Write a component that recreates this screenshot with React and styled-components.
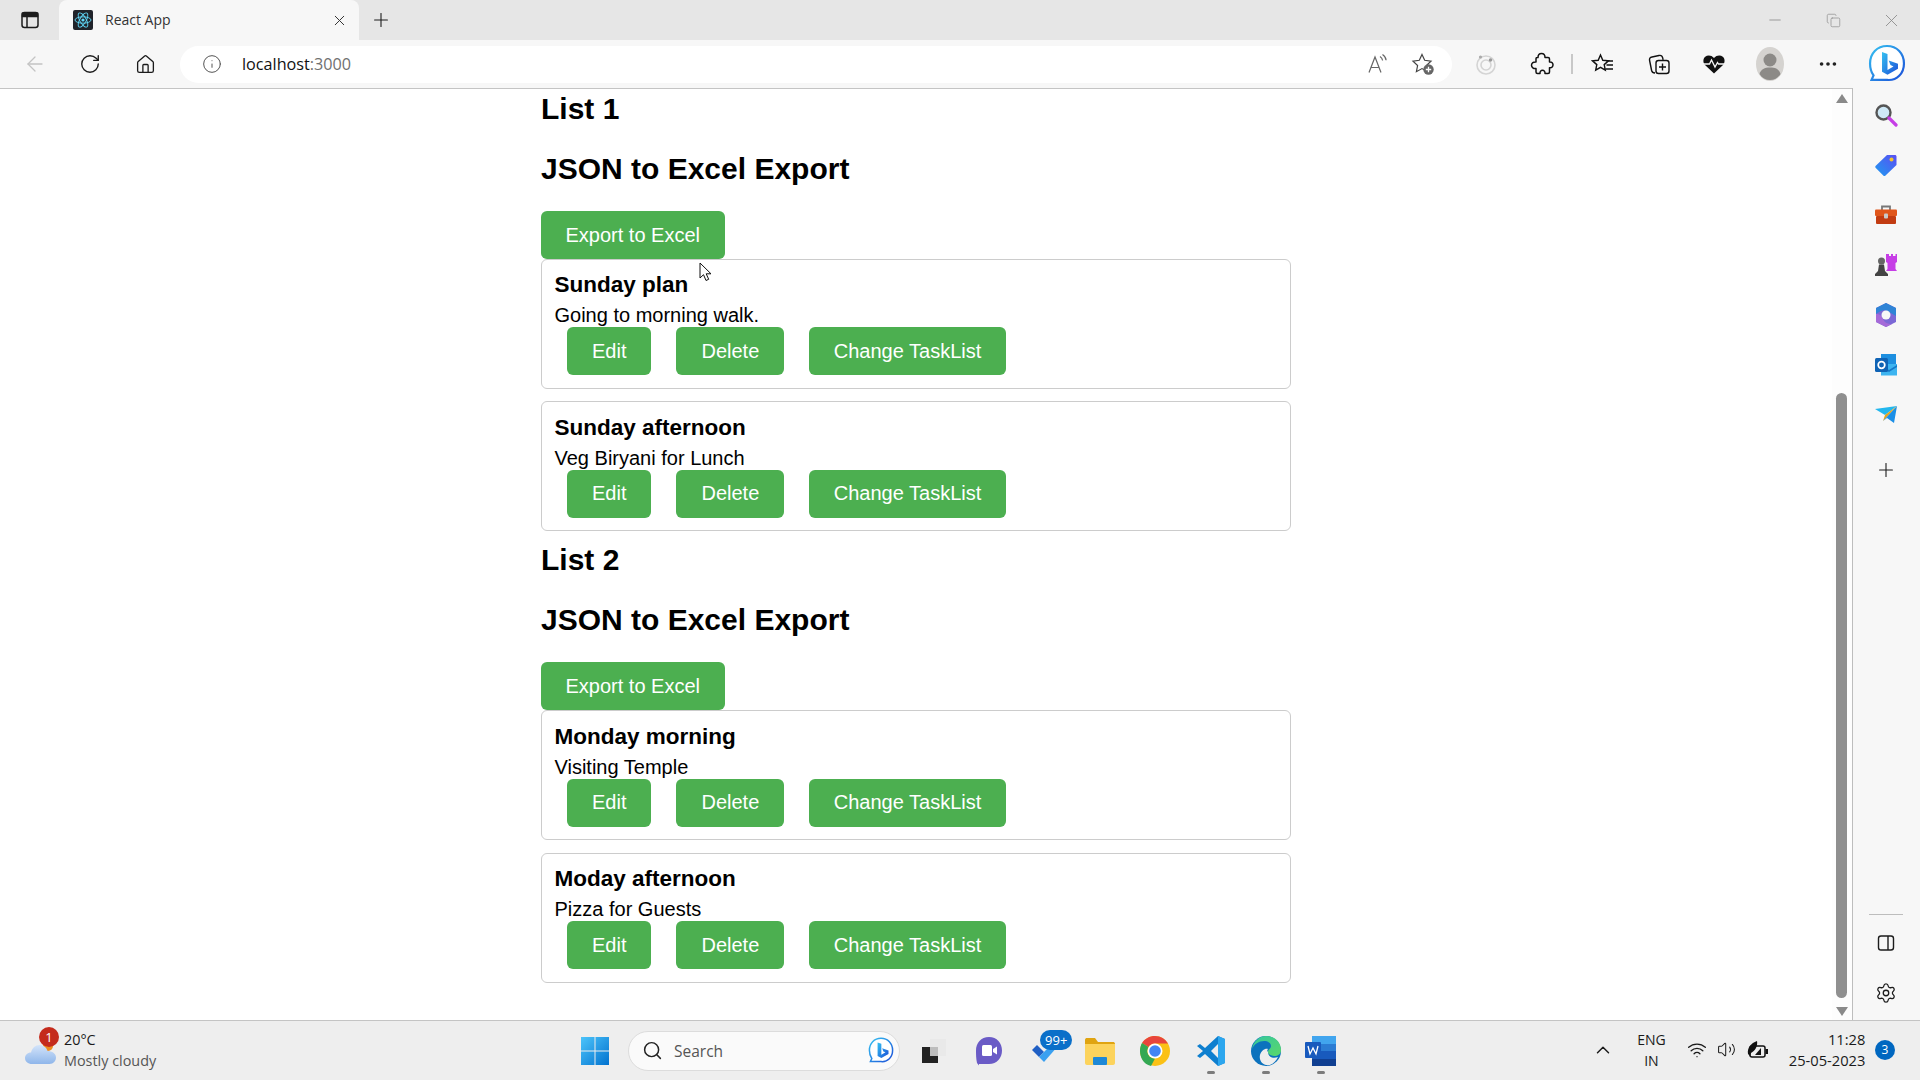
import React from 'react';
import styled, { createGlobalStyle } from 'styled-components';
import {
    ArrowLeft, RotateCw, Home, Info, Plus, X, Minus, Copy,
    MoreHorizontal, Search, Settings, ChevronUp, Wifi, Volume2
} from 'lucide-react';

const GlobalStyle = createGlobalStyle`
    html, body {
        margin: 0;
        height: 100%;
        overflow: hidden;
    }
    * {
        box-sizing: border-box;
    }
`;

const UI_FONT = '"Open Sans", "Noto Sans", sans-serif';

const Screen = styled.div`
    width: 1920px;
    height: 1080px;
    display: flex;
    flex-direction: column;
    background: #fff;
    overflow: hidden;
`;

/* browser chrome */
const TabStrip = styled.div`
    height: 40px;
    flex: none;
    display: flex;
    align-items: stretch;
    background: #e6e6e6;
`;
const Slot = styled.div`
    width: ${p => p.$w}px;
    flex: none;
    display: flex;
    align-items: center;
    justify-content: center;
    color: ${p => p.$color || '#1c1c1c'};
`;
const Tab = styled.div`
    width: 300px;
    flex: none;
    display: flex;
    align-items: center;
    padding: 0 11px 0 14px;
    background: #f7f7f7;
    border-radius: 8px 8px 0 0;
`;
const TabTitle = styled.span`
    flex: 1;
    margin-left: 12px;
    padding-bottom: 2px;
    font: 14px ${UI_FONT};
    color: #333;
`;
const StripSpacer = styled.div`
    flex: 1;
`;
const Toolbar = styled.div`
    height: 48px;
    flex: none;
    display: flex;
    align-items: center;
    padding-left: 7.5px;
    background: #f7f7f7;
`;
const AddressPill = styled.div`
    width: 1272px;
    height: 37px;
    flex: none;
    margin: 0 6px 0 7.5px;
    display: flex;
    align-items: center;
    padding: 0 0 0 22px;
    background: #fff;
    border-radius: 19px;
`;
const Url = styled.span`
    margin-left: 20px;
    flex: 1;
    font: 16.2px ${UI_FONT};
    color: #111;
`;
const UrlPort = styled.span`
    color: #707070;
`;
const ToolbarSeparator = styled.div`
    width: 2px;
    height: 20px;
    flex: none;
    margin: 0 2px 0 1px;
    background: #c8c8c8;
`;

/* page */
const Main = styled.div`
    flex: 1;
    min-height: 0;
    display: flex;
`;
const Page = styled.div`
    flex: 1;
    min-width: 0;
    position: relative;
    border-top: 1px solid #c4c4c4;
    padding-top: 3px;
    font-family: "Liberation Sans", Arial, sans-serif;
    color: #000;
    overflow: hidden;
`;
const Content = styled.div`
    width: 750px;
    margin: 0 auto;
`;
const Heading = styled.h2`
    margin: 0 0 25px;
    font-size: 30px;
    line-height: 34.5px;
    font-weight: 700;
`;
const Button = styled.button`
    display: block;
    height: 48px;
    padding: 0 ${p => (p.$tight ? 24.5 : 25)}px;
    border: 0;
    border-radius: 6px;
    background: #4caf50;
    color: #fff;
    font: 20px "Liberation Sans", Arial, sans-serif;
`;
const Card = styled.div`
    height: 130px;
    margin-bottom: 12.4px;
    padding: 12.2px 12.5px;
    border: 1.25px solid #ccc;
    border-radius: 6px;

    &:last-child {
        margin-bottom: 12px;
    }
`;
const CardTitle = styled.h3`
    margin: 0 0 6.1px;
    font-size: 22.5px;
    line-height: 26px;
    font-weight: 700;
`;
const CardText = styled.p`
    margin: 0;
    font-size: 20px;
    line-height: 23px;
`;
const CardActions = styled.div`
    display: flex;
    gap: 25px;
    padding: 0 12.5px;
`;
const Cursor = styled.svg`
    position: absolute;
    left: 699px;
    top: 173px;
`;

/* scrollbar + edge sidebar */
const ScrollBar = styled.div`
    width: 20px;
    flex: none;
    display: flex;
    flex-direction: column;
    align-items: center;
    padding: 5px 1px 0 0;
    border-top: 1px solid #c4c4c4;
    background: #fdfdfd;
`;
const ScrollArrow = styled.div`
    width: 0;
    height: 0;
    border-left: 6px solid transparent;
    border-right: 6px solid transparent;
    ${p => p.$down
        ? 'border-top: 9px solid #8a8a8a; margin-top: 9px;'
        : 'border-bottom: 9px solid #8a8a8a;'}
`;
const ScrollThumb = styled.div`
    width: 11px;
    height: 605px;
    margin-top: 290px;
    border-radius: 6px;
    background: #8f8f8f;
`;
const Sidebar = styled.div`
    width: 68px;
    flex: none;
    display: flex;
    flex-direction: column;
    align-items: center;
    padding: 2px 1px 2px 0;
    border-left: 1px solid #bdbdbd;
    background: #f7f7f7;
`;
const SideItem = styled.div`
    height: 50px;
    width: 100%;
    flex: none;
    display: flex;
    align-items: center;
    justify-content: center;
    margin-top: ${p => p.$offset || 0}px;
    color: #1c1c1c;
`;
const SideSpacer = styled.div`
    flex: 1;
`;
const SideRule = styled.div`
    width: 34px;
    height: 1px;
    margin-bottom: 3px;
    background: #bdbdbd;
`;

/* taskbar */
const Taskbar = styled.div`
    height: 60px;
    flex: none;
    display: flex;
    align-items: center;
    border-top: 1px solid #c4c4c4;
    background: #eeeeee;
    font-family: ${UI_FONT};
    color: #1a1a1a;
`;
const Weather = styled.div`
    width: 581px;
    height: 100%;
    flex: none;
    display: flex;
    align-items: center;
    padding: 0 0 2px 25px;
`;
const WeatherIcon = styled.div`
    position: relative;
    width: 32px;
    height: 34px;
    flex: none;
    display: flex;
    align-items: flex-end;
    padding-bottom: 3px;
`;
const AlertBadge = styled.span`
    position: absolute;
    left: 14px;
    top: -5.5px;
    width: 20px;
    height: 20px;
    border-radius: 50%;
    background: #c42b1c;
    color: #fff;
    font: 13px/20px ${UI_FONT};
    text-align: center;
`;
const WeatherText = styled.div`
    margin-left: 7px;
    font-size: 14.4px;
    line-height: 21px;
`;
const WeatherSub = styled.div`
    color: #555;
`;
const SearchPill = styled.div`
    width: 272px;
    height: 40px;
    flex: none;
    margin: 0 6.5px 0 19px;
    display: flex;
    align-items: center;
    padding: 0 5px 0 13px;
    background: #fafafa;
    border: 1px solid #dcdcdc;
    border-radius: 20px;
`;
const SearchLabel = styled.span`
    flex: 1;
    margin-left: 11px;
    font-size: 15.5px;
    color: #555;
`;
const AppSlot = styled.div`
    position: relative;
    width: 55.3px;
    height: 100%;
    flex: none;
    display: flex;
    align-items: center;
    justify-content: center;
`;
const RunningDot = styled.span`
    position: absolute;
    left: 50%;
    bottom: 6px;
    width: 8px;
    height: 3px;
    margin-left: -4px;
    border-radius: 2px;
    background: #7c7c7c;
`;
const CountBadge = styled.span`
    position: absolute;
    left: 23px;
    top: 9px;
    padding: 0 5px;
    height: 20px;
    border-radius: 10px;
    background: #0a6fc9;
    color: #fff;
    font: 13px/20px ${UI_FONT};
`;
const Tray = styled.div`
    flex: 1;
    height: 100%;
    display: flex;
    align-items: center;
    padding: 0 0 2px 243.5px;
`;
const TrayLang = styled.div`
    width: 50px;
    flex: none;
    margin: 0 11px 0 12px;
    font-size: 14px;
    line-height: 21px;
    text-align: center;
`;
const Clock = styled.div`
    width: 88px;
    flex: none;
    margin-left: 8px;
    font-size: 14.7px;
    line-height: 21px;
    text-align: right;
`;
const Notification = styled.span`
    width: 20px;
    height: 20px;
    flex: none;
    margin-left: 9.6px;
    border-radius: 50%;
    background: #0067c0;
    color: #fff;
    font: 12px/20px ${UI_FONT};
    text-align: center;
`;

const TabsIcon = () => (
    <svg width="20" height="20" viewBox="0 0 20 20" fill="none" stroke="#1c1c1c" strokeWidth="1.5">
        <rect x="2" y="2.5" width="16" height="15" rx="2.5" />
        <path d="M2.5 3.2h15v3.3h-15z" fill="#1c1c1c" />
        <path d="M7 6v11" />
    </svg>
);
const ReactFavicon = () => (
    <svg width="20" height="20" viewBox="0 0 20 20">
        <rect width="20" height="20" rx="2" fill="#20232a" />
        <g fill="none" stroke="#61dafb" strokeWidth="0.9">
            <ellipse cx="10" cy="10" rx="8" ry="3.2" />
            <ellipse cx="10" cy="10" rx="8" ry="3.2" transform="rotate(60 10 10)" />
            <ellipse cx="10" cy="10" rx="8" ry="3.2" transform="rotate(120 10 10)" />
        </g>
        <circle cx="10" cy="10" r="1.6" fill="#61dafb" />
    </svg>
);
const ReadAloudIcon = () => (
    <svg width="22" height="22" viewBox="0 0 22 22" fill="none" stroke="#666" strokeWidth="1.2">
        <path d="M2 19.5 8 4l6 15.5M4 14.5h8" />
        <path d="M13 3.5c1.6 1 2.4 2.4 2.6 4M15.5 1.5c2.2 1.4 3.4 3.5 3.6 5.8" />
    </svg>
);
const FavAddIcon = () => (
    <svg width="24" height="24" viewBox="0 0 24 24" fill="none">
        <path d="m11 2.5 2.7 5.8 6.3.8-4.6 4.4 1.2 6.2L11 16.6l-5.6 3.1 1.2-6.2L2 9.1l6.3-.8z" stroke="#444" strokeWidth="1.2" />
        <circle cx="17.5" cy="17.5" r="5.2" fill="#666" />
        <path d="M17.5 14.8v5.4M14.8 17.5h5.4" stroke="#fff" strokeWidth="1.3" />
    </svg>
);
const RadarIcon = () => (
    <svg width="22" height="24" viewBox="0 0 22 24" fill="none" stroke="#d4d4d4" strokeWidth="1.6">
        <circle cx="11" cy="13" r="9" />
        <circle cx="11" cy="13" r="5" />
        <circle cx="5.5" cy="5" r="1.6" fill="#aaa" stroke="none" />
        <circle cx="15.5" cy="8" r="1.7" fill="#999" stroke="none" />
    </svg>
);
const ExtensionIcon = () => (
    <svg width="24" height="24" viewBox="0 0 24 24" fill="none" stroke="#111" strokeWidth="1.5" strokeLinejoin="round">
        <path d="M8 5.500c0-2.500 1.500-4 3.500-4s3.500 1.500 3.500 4h3a1.500 1.500 0 0 1 1.500 1.500v3c2.500-.3 3.500 1.200 3.500 2.800s-1 3.200-3.500 2.900V20a1.500 1.500 0 0 1-1.500 1.500h-3c.2-2-1-3.300-2.500-3.300S9.800 19.500 10 21.500H7.500A1.500 1.500 0 0 1 6 20v-3.500c-2.500.4-4.500-1-4.500-3.200S3.500 9.700 6 10V7a1.500 1.500 0 0 1 2-1.500z" />
    </svg>
);
const FavoritesIcon = () => (
    <svg width="24" height="24" viewBox="0 0 24 24" fill="none" stroke="#111" strokeWidth="1.4">
        <path d="m9.500 3 2.300 5.300 5.700.6-4.300 3.700 1.100 5.600-4.800-2.900-4.800 2.900 1.100-5.600L1.500 8.900l5.700-.6z" />
        <path d="M15.500 9H22M15.500 13H22M14.500 17H22" strokeWidth="1.3" />
    </svg>
);
const CollectionsIcon = () => (
    <svg width="24" height="24" viewBox="0 0 24 24" fill="none" stroke="#111" strokeWidth="1.4">
        <path d="M8 21c-2 0-3-.8-3.400-2.500L2.600 8.500C2.200 6.600 3 5.400 5 5l7-1.500c2-.4 3.200.3 3.700 2.300l.4 2" />
        <rect x="9" y="8.500" width="13" height="13" rx="2.500" />
        <path d="M15.500 11.500v7M12 15h7" />
    </svg>
);
const HeartIcon = () => (
    <svg width="24" height="24" viewBox="0 0 24 24">
        <path d="M12 21.500 3 13C.8 10.600 .9 6.800 3.200 4.800 5.600 2.800 9.500 3.100 12 6c2.500-2.900 6.400-3.200 8.800-1.200 2.300 2 2.400 5.800.2 8.200z" fill="#111" />
        <path d="M1 12h6.500l2-4 3.500 7 2.500-4.500 1 1.500H23" fill="none" stroke="#f7f7f7" strokeWidth="1.300" />
    </svg>
);
const AvatarIcon = () => (
    <svg width="28" height="34" viewBox="0 0 28 34">
        <ellipse cx="14" cy="17" rx="14" ry="17" fill="#d5d3d0" />
        <circle cx="14" cy="13" r="6.500" fill="#8c8a87" />
        <path d="M3.500 27c1.500-5 5-6.500 10.500-6.500S23 22 24.500 27c-2.500 4-6 6-10.500 6S6 31 3.500 27z" fill="#8c8a87" />
    </svg>
);
const BingIcon = ({ size }) => (
    <svg width={size} height={size * 1.05} viewBox="0 0 38 40">
        <defs>
            <linearGradient id="bingStroke" x1="0" y1="0" x2="1" y2="1">
                <stop offset="0" stopColor="#35c1f1" />
                <stop offset="1" stopColor="#1b4fd8" />
            </linearGradient>
        </defs>
        <path d="M19 2c10 0 17 7.500 17 17.500S29 37 19 36H3.500l2-4.500C3 28 2 24 2 19.500 2 9.500 9 2 19 2z" fill="#fff" stroke="url(#bingStroke)" strokeWidth="2.200" />
        <path d="M14 8l5.500 2v16l6-3.500-3-1.400-1.800-4.600 9.300 3.300v5l-10.500 6-5.500-3z" fill="url(#bingStroke)" />
    </svg>
);
const PanelIcon = () => (
    <svg width="20" height="20" viewBox="0 0 20 20" fill="none" stroke="#1c1c1c" strokeWidth="1.400">
        <rect x="2.500" y="3" width="15" height="14" rx="2.500" />
        <path d="M12 3v14" />
    </svg>
);
const MagnifierColor = () => (
    <svg width="24" height="24" viewBox="0 0 24 24" fill="none">
        <circle cx="9.500" cy="9.500" r="7" fill="#cfe9f7" stroke="#555" strokeWidth="2.400" />
        <path d="m15 15 7 7" stroke="#c63ee6" strokeWidth="3.200" strokeLinecap="round" />
    </svg>
);
const TagColor = () => (
    <svg width="24" height="24" viewBox="0 0 24 24">
        <defs>
            <linearGradient id="tagFill" x1="0" y1="1" x2="1" y2="0">
                <stop offset="0" stopColor="#1e9bf0" />
                <stop offset="1" stopColor="#5a4ff3" />
            </linearGradient>
        </defs>
        <path d="M13 2h8c.8 0 1.500.7 1.500 1.500V12L11.500 22.500c-.7.700-1.500.700-2.200 0L1.800 15c-.7-.7-.7-1.500 0-2.200z" fill="url(#tagFill)" />
        <circle cx="17.500" cy="6.500" r="2" fill="#f2c230" />
    </svg>
);
const ToolboxColor = () => (
    <svg width="24" height="24" viewBox="0 0 24 24" fill="none">
        <path d="M8 7V3.500h8V7" stroke="#777" strokeWidth="1.800" />
        <rect x="1" y="6.500" width="22" height="6.500" rx="1" fill="#e0561b" />
        <rect x="2" y="13" width="20" height="8" rx="1" fill="#c23c12" />
        <rect x="10" y="10.500" width="4" height="5" rx="1" fill="#c9c9c9" />
    </svg>
);
const ChessColor = () => (
    <svg width="24" height="24" viewBox="0 0 24 24">
        <path d="M14 1h2v2h2V1h2v2h2.500V1H24v8l-1.500 1v6l1.500 2H13l1.500-2v-6L13 9V1z" fill="#c63ee6" transform="translate(-1 0)" />
        <circle cx="7.500" cy="8" r="3.500" fill="#666" />
        <path d="M5 11.500h5l1 6.500 3 3v2H1v-2l3-3z" fill="#444" />
    </svg>
);
const M365Color = () => (
    <svg width="24" height="26" viewBox="0 0 24 26">
        <path d="M12 1 22 6v14l-10 5L2 20V6z" fill="#7b68d6" />
        <path d="M12 1 22 6v8l-6-3.500C14 8 9 7 5 10L2 12V6z" fill="#2f84d6" />
        <path d="M2 12v8l10 5 6-3c-5 0-8-2-9-5-1-3-3-5-7-5z" fill="#a56ad8" />
        <circle cx="12" cy="13" r="4.500" fill="#f7f7f7" />
    </svg>
);
const OutlookColor = () => (
    <svg width="24" height="24" viewBox="0 0 24 24">
        <rect x="7" y="1" width="15" height="12" fill="#1d8fe0" />
        <path d="M7 11h16v11.500H7z" fill="#3db4f0" />
        <path d="m7 12 8 5 8-5v2l-8 5-8-5z" fill="#1478c8" />
        <rect x="1" y="5" width="13" height="14" rx="1.500" fill="#0f63b5" />
        <circle cx="7.500" cy="12" r="3.300" fill="none" stroke="#fff" strokeWidth="1.700" />
    </svg>
);
const SendColor = () => (
    <svg width="24" height="20" viewBox="0 0 24 20">
        <path d="M1 4 23 1 11 10z" fill="#22b7ee" />
        <path d="M23 1 11 10l-2 6z" fill="#e4a51c" />
        <path d="M23 1 20 18l-7-5-4 3z" fill="#1c8fe6" />
    </svg>
);
const WindowsLogo = () => (
    <svg width="28" height="28" viewBox="0 0 28 28">
        <defs>
            <linearGradient id="winFill" x1="0" y1="0" x2="1" y2="1">
                <stop offset="0" stopColor="#4cc4fa" />
                <stop offset="1" stopColor="#0272cf" />
            </linearGradient>
        </defs>
        <path d="M0 0h13.500v13.500H0zM14.500 0H28v13.500H14.500zM0 14.500h13.500V28H0zM14.500 14.500H28V28H14.500z" fill="url(#winFill)" />
    </svg>
);
const TaskViewIcon = () => (
    <svg width="26" height="26" viewBox="0 0 26 26">
        <rect x="9" y="1" width="16" height="17" fill="#e9e9e9" />
        <rect x="1" y="9" width="16" height="16" fill="#222" />
        <rect x="9" y="9" width="8" height="9" fill="#bdbdbd" />
    </svg>
);
const ChatIcon = () => (
    <svg width="28" height="32" viewBox="0 0 28 32">
        <path d="M14 2c8 0 13 6 13 13.500S22 29 14 29H4v1.500L2 28C1 24 1 19 1 15.500 1 8 6 2 14 2z" fill="#6a5bc6" />
        <rect x="7" y="10" width="10" height="11" rx="1.500" fill="#fff" />
        <path d="m18 14 4-2.500v8L18 17z" fill="#fff" />
    </svg>
);
const TodoIcon = () => (
    <svg width="28" height="26" viewBox="0 0 28 26">
        <path d="m1 12 5-5 7 7-5 5z" fill="#1f5fc4" />
        <path d="m8 19 5-5L24 3l3 5-14 16z" fill="#3aa0f0" />
    </svg>
);
const FolderIcon = () => (
    <svg width="30" height="28" viewBox="0 0 30 28">
        <path d="M0 3c0-1.500 1-2 2-2h8l3 4h15c1 0 2 .5 2 2v2H0z" fill="#e0a411" />
        <path d="M0 7h30v19c0 1-1 2-2 2H2c-1 0-2-1-2-2z" fill="#fcd35c" />
        <rect x="8" y="20" width="14" height="8" rx="1" fill="#1e88d6" />
    </svg>
);
const ChromeIcon = () => (
    <svg width="30" height="30" viewBox="0 0 30 30">
        <circle cx="15" cy="15" r="15" fill="#fbc116" />
        <path d="M15 0a15 15 0 0 1 13 7.500H15A7.500 7.500 0 0 0 8.500 11L2 7C4.700 2.700 9.500 0 15 0z" fill="#e8453c" />
        <path d="M2 7l6.500 4A7.500 7.500 0 0 0 15 22.500L11 30C3 28 0 21 0 15c0-3 .7-5.700 2-8z" fill="#34a853" />
        <circle cx="15" cy="15" r="7.500" fill="#fff" />
        <circle cx="15" cy="15" r="5.800" fill="#4285f4" />
    </svg>
);
const VsCodeIcon = () => (
    <svg width="30" height="32" viewBox="0 0 30 32">
        <path d="M22 1 29 4v24l-7 3L9 19l-5 4-3-2 6-5-6-5 3-2 5 4z" fill="#0e7fcf" />
        <path d="M22 1 29 4v24l-7 3z" fill="#2ca6ee" />
        <path d="m22 9-7 7 7 7z" fill="#eeeeee" />
    </svg>
);
const EdgeIcon = () => (
    <svg width="30" height="32" viewBox="0 0 30 32">
        <defs>
            <linearGradient id="edgeFill" x1="0" y1="0" x2="1" y2="1">
                <stop offset="0" stopColor="#33c6a0" />
                <stop offset="1" stopColor="#5bd86a" />
            </linearGradient>
        </defs>
        <circle cx="15" cy="16" r="15" fill="#0c72bd" />
        <path d="M15 1c9 0 15 6 15 14 0 4-3 6-7 6-3 0-6-2-6-4 0-3 3-3 3-6 0-3-3-5-7-5-5 0-10 3-12 8C2 7 8 1 15 1z" fill="url(#edgeFill)" />
        <path d="M17 17c0 5 5 7 10 5-2 5-7 9-12 8-5-1-7-6-6-10 1-4 5-7 8-6-1 1-1 2 0 3z" fill="#eeeeee" />
    </svg>
);
const WordIcon = () => (
    <svg width="32" height="30" viewBox="0 0 32 30">
        <rect x="7" y="0" width="24" height="30" rx="2" fill="#2b7cd3" />
        <rect x="7" y="0" width="24" height="8" fill="#41a5ee" />
        <rect x="7" y="15" width="24" height="8" fill="#185abd" />
        <rect x="7" y="23" width="24" height="7" fill="#103f91" />
        <rect x="0" y="6" width="16" height="16" rx="1" fill="#185abd" />
        <path d="m3 10 2 8 3-6 3 6 2-8" fill="none" stroke="#fff" strokeWidth="1.300" />
    </svg>
);
const CloudIcon = () => (
    <svg width="32" height="24" viewBox="0 0 32 24">
        <defs>
            <linearGradient id="cloudFill" x1="0" y1="0" x2="0" y2="1">
                <stop offset="0" stopColor="#d3e4fa" />
                <stop offset="1" stopColor="#8fb6ea" />
            </linearGradient>
        </defs>
        <circle cx="23" cy="6" r="5" fill="#ee8b1e" />
        <path d="M7 24c-4 0-7-2.500-7-6 0-3 2.500-5.500 6-5.500C7 8 10.500 5 14.500 5c4 0 7 2.500 8 6 4.500 0 8.500 2.500 8.500 6.500 0 3.500-2.500 6.500-6.500 6.500z" fill="url(#cloudFill)" />
    </svg>
);
const BatteryIcon = () => (
    <svg width="22" height="20" viewBox="0 0 22 20" fill="none">
        <rect x="3" y="6" width="15" height="11" rx="2" stroke="#111" strokeWidth="1.500" />
        <rect x="18.500" y="9" width="2.500" height="5" fill="#111" />
        <path d="M1 14C0 8 4 3 10 1c1 5-2 10-6 12l-1 3z" fill="#111" />
        <path d="M8 15l6-7v7z" fill="#111" />
    </svg>
);
const PointerIcon = () => (
    <Cursor width="13" height="20" viewBox="0 0 13 20">
        <path d="M1 1v15l3.500-3.300 2.500 5.800 2.700-1.200-2.500-5.500H12z" fill="#fff" stroke="#111" strokeWidth="1" />
    </Cursor>
);

const lists = [
    {
        title: 'List 1',
        tasks: [
            { title: 'Sunday plan', text: 'Going to morning walk.' },
            { title: 'Sunday afternoon', text: 'Veg Biryani for Lunch' }
        ]
    },
    {
        title: 'List 2',
        tasks: [
            { title: 'Monday morning', text: 'Visiting Temple' },
            { title: 'Moday afternoon', text: 'Pizza for Guests' }
        ]
    }
];

const TaskCard = ({ title, text }) => (
    <Card>
        <CardTitle>{title}</CardTitle>
        <CardText>{text}</CardText>
        <CardActions>
            <Button>Edit</Button>
            <Button>Delete</Button>
            <Button $tight>Change TaskList</Button>
        </CardActions>
    </Card>
);

const BrowserChrome = () => (
    <>
        <TabStrip>
            <Slot $w={59}><TabsIcon /></Slot>
            <Tab>
                <ReactFavicon />
                <TabTitle>React App</TabTitle>
                <X size={17} strokeWidth={1.4} color="#333" />
            </Tab>
            <Slot $w={44}><Plus size={22} strokeWidth={1.2} /></Slot>
            <StripSpacer />
            <Slot $w={58} $color="#8a8a8a"><Minus size={18} strokeWidth={1.1} /></Slot>
            <Slot $w={58} $color="#8a8a8a"><Copy size={15} strokeWidth={1.1} /></Slot>
            <Slot $w={58} $color="#8a8a8a"><X size={21} strokeWidth={1} /></Slot>
        </TabStrip>
        <Toolbar>
            <Slot $w={55} $color="#c4c4c4"><ArrowLeft size={24} strokeWidth={1.3} /></Slot>
            <Slot $w={55}><RotateCw size={22} strokeWidth={1.5} /></Slot>
            <Slot $w={55}><Home size={21} strokeWidth={1.5} /></Slot>
            <AddressPill>
                <Info size={20} strokeWidth={1.2} color="#555" />
                <Url>localhost<UrlPort>:3000</UrlPort></Url>
                <Slot $w={44}><ReadAloudIcon /></Slot>
                <Slot $w={46}><FavAddIcon /></Slot>
                <Slot $w={6} />
            </AddressPill>
            <Slot $w={56}><RadarIcon /></Slot>
            <Slot $w={56}><ExtensionIcon /></Slot>
            <ToolbarSeparator />
            <Slot $w={56}><FavoritesIcon /></Slot>
            <Slot $w={55}><CollectionsIcon /></Slot>
            <Slot $w={55}><HeartIcon /></Slot>
            <Slot $w={58}><AvatarIcon /></Slot>
            <Slot $w={58}><MoreHorizontal size={22} strokeWidth={2} color="#222" /></Slot>
            <Slot $w={59}><BingIcon size={38} /></Slot>
        </Toolbar>
    </>
);

const EdgeSidebar = () => (
    <Sidebar>
        <SideItem><MagnifierColor /></SideItem>
        <SideItem><TagColor /></SideItem>
        <SideItem><ToolboxColor /></SideItem>
        <SideItem><ChessColor /></SideItem>
        <SideItem><M365Color /></SideItem>
        <SideItem><OutlookColor /></SideItem>
        <SideItem><SendColor /></SideItem>
        <SideItem $offset={5}><Plus size={22} strokeWidth={1.2} /></SideItem>
        <SideSpacer />
        <SideRule />
        <SideItem><PanelIcon /></SideItem>
        <SideItem><Settings size={22} strokeWidth={1.4} /></SideItem>
    </Sidebar>
);

const WindowsTaskbar = () => (
    <Taskbar>
        <Weather>
            <WeatherIcon>
                <CloudIcon />
                <AlertBadge>1</AlertBadge>
            </WeatherIcon>
            <WeatherText>
                <div>20°C</div>
                <WeatherSub>Mostly cloudy</WeatherSub>
            </WeatherText>
        </Weather>
        <WindowsLogo />
        <SearchPill>
            <Search size={21} strokeWidth={1.7} color="#222" />
            <SearchLabel>Search</SearchLabel>
            <BingIcon size={26} />
        </SearchPill>
        <AppSlot><TaskViewIcon /></AppSlot>
        <AppSlot><ChatIcon /></AppSlot>
        <AppSlot>
            <TodoIcon />
            <CountBadge>99+</CountBadge>
        </AppSlot>
        <AppSlot><FolderIcon /></AppSlot>
        <AppSlot><ChromeIcon /></AppSlot>
        <AppSlot><VsCodeIcon /><RunningDot /></AppSlot>
        <AppSlot><EdgeIcon /><RunningDot /></AppSlot>
        <AppSlot><WordIcon /><RunningDot /></AppSlot>
        <Tray>
            <ChevronUp size={22} strokeWidth={1.6} />
            <TrayLang>ENG<br />IN</TrayLang>
            <Wifi size={20} strokeWidth={1.6} />
            <Slot $w={38}><Volume2 size={19} strokeWidth={1.3} /></Slot>
            <Slot $w={2} />
            <BatteryIcon />
            <Clock>11:28<br />25-05-2023</Clock>
            <Notification>3</Notification>
        </Tray>
    </Taskbar>
);

const App = () => (
    <Screen>
        <GlobalStyle />
        <BrowserChrome />
        <Main>
            <Page>
                <Content>
                    {lists.map(list => (
                        <section key={list.title}>
                            <Heading>{list.title}</Heading>
                            <Heading>JSON to Excel Export</Heading>
                            <Button $tight>Export to Excel</Button>
                            {list.tasks.map(task => (
                                <TaskCard key={task.title} title={task.title} text={task.text} />
                            ))}
                        </section>
                    ))}
                </Content>
                <PointerIcon />
            </Page>
            <ScrollBar>
                <ScrollArrow />
                <ScrollThumb />
                <ScrollArrow $down />
            </ScrollBar>
            <EdgeSidebar />
        </Main>
        <WindowsTaskbar />
    </Screen>
);

export default App;
